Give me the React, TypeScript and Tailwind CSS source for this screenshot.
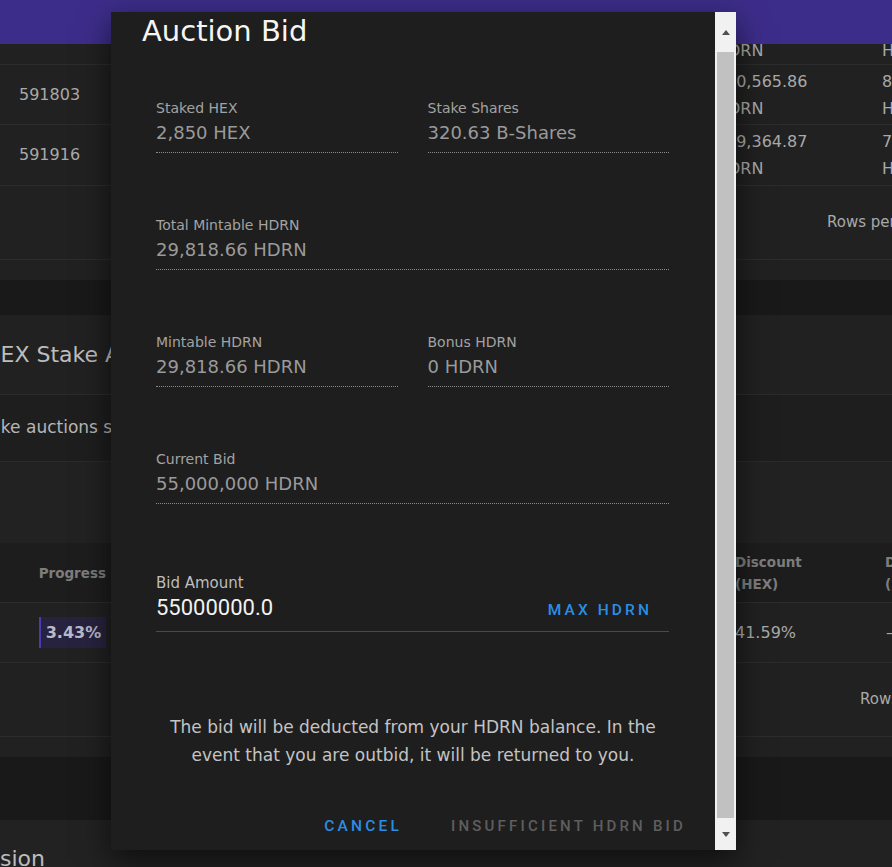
const Field = ({ label, value }: { label: string; value: string }) => {
	return (
		<div className="border-b border-dotted border-[#8c8c8c] pb-[6px]">
			<p className="text-[14px] leading-[20px] text-[#a3a3a3]">{label}</p>
			<p className="mt-[2px] text-[18px] leading-[26px] text-[#9a9a9a]">{value}</p>
		</div>
	);
};

const AuctionBidModal = () => {
	return (
		<div className="absolute left-[111px] top-[12px] flex h-[838px] w-[625px] bg-[#1e1e1e] shadow-[0_10px_30px_rgba(0,0,0,0.6)]">
			<div className="flex w-[604px] flex-col">
				{/* Title */}
				<h2 className="mt-[1px] pl-[31px] text-[29px] leading-[36px] text-[#f5f5f5]">Auction Bid</h2>

				{/* Stake info */}
				<div className="mt-[49px] flex flex-col gap-[62px] pl-[45px] pr-[46px]">
					<div className="grid grid-cols-2 gap-[30px]">
						<Field label="Staked HEX" value="2,850 HEX" />
						<Field label="Stake Shares" value="320.63 B-Shares" />
					</div>
					<Field label="Total Mintable HDRN" value="29,818.66 HDRN" />
					<div className="grid grid-cols-2 gap-[30px]">
						<Field label="Mintable HDRN" value="29,818.66 HDRN" />
						<Field label="Bonus HDRN" value="0 HDRN" />
					</div>
					<Field label="Current Bid" value="55,000,000 HDRN" />
				</div>

				{/* Bid input */}
				<div className="ml-[45px] mr-[46px] mt-[69px] border-b border-[#4a4a4a] pb-[9px]">
					<p className="text-[15px] leading-[20px] text-[#bdbdbd]">Bid Amount</p>
					<div className="flex items-center justify-between">
						<span className="font-['Roboto',sans-serif] text-[22px] leading-[28px] text-[#f2f2f2]">
							55000000.0
						</span>
						<button className="mr-[17px] mt-[6px] font-['Roboto',sans-serif] text-[15.5px] font-medium tracking-[0.2em] text-[#2a8de6]">
							MAX HDRN
						</button>
					</div>
				</div>

				{/* Note */}
				<p className="mx-auto mt-[81px] w-[520px] text-center text-[17px] leading-[28px] text-[#c4c4c4]">
					The bid will be deducted from your HDRN balance. In the event that you are outbid, it will be
					returned to you.
				</p>

				{/* Actions */}
				<div className="mt-[45px] flex items-center justify-end gap-[49px] pr-[29px] font-['Roboto',sans-serif] font-medium leading-[24px] tracking-[0.2em]">
					<button className="text-[15.5px] text-[#2a8de6]">CANCEL</button>
					<button className="text-[15px] text-[#5e5e5e]">INSUFFICIENT HDRN BID</button>
				</div>
			</div>

			{/* Scrollbar */}
			<div className="flex w-[21px] flex-col items-center bg-[#f1f1f1]">
				<div className="flex h-[40px] items-center justify-center">
					<div className="h-0 w-0 border-x-[4px] border-b-[5px] border-x-transparent border-b-[#505050]" />
				</div>
				<div className="h-[766px] w-[17px] bg-[#c1c1c1]" />
				<div className="flex flex-1 items-center justify-center">
					<div className="h-0 w-0 border-x-[4px] border-t-[5px] border-x-transparent border-t-[#505050]" />
				</div>
			</div>
		</div>
	);
};

const App = () => {
	return (
		<div className="relative h-[867px] w-[892px] overflow-hidden bg-[#191919] font-['DejaVu_Sans',sans-serif] text-[16px] text-[#a9a9a9]">
			{/* Header */}
			<div className="h-[44px] bg-[#3d2d8a]" />

			{/* Stakes table */}
			<div className="bg-[#212121]">
				<div className="flex h-[21px] overflow-hidden border-b border-[#2c2c2c]">
					<div className="w-[716px] shrink-0" />
					<p className="-mt-[7px] w-[166px] shrink-0 leading-[27px]">HDRN</p>
					<p className="-mt-[7px] leading-[27px]">HEX</p>
				</div>
				<div className="flex h-[60px] items-center border-b border-[#2c2c2c]">
					<p className="w-[726px] shrink-0 pl-[19px]">591803</p>
					<div className="w-[156px] shrink-0 leading-[27px]">
						<p>30,565.86</p>
						<p className="-ml-[10px]">HDRN</p>
					</div>
					<div className="leading-[27px]">
						<p>8</p>
						<p>HEX</p>
					</div>
				</div>
				<div className="flex h-[61px] items-center border-b border-[#2c2c2c]">
					<p className="w-[726px] shrink-0 pl-[19px]">591916</p>
					<div className="w-[156px] shrink-0 leading-[27px]">
						<p>29,364.87</p>
						<p className="-ml-[10px]">HDRN</p>
					</div>
					<div className="leading-[27px]">
						<p>7</p>
						<p>HEX</p>
					</div>
				</div>
				<div className="flex h-[74px] items-center justify-end border-b border-[#2c2c2c]">
					<p className="w-[65px] whitespace-nowrap text-[15px]">Rows per page</p>
				</div>
				<div className="h-[20px]" />
			</div>

			<div className="h-[35px]" />

			{/* Auctions card */}
			<div className="bg-[#212121]">
				<div className="flex h-[80px] items-center overflow-hidden border-b border-[#2c2c2c]">
					<p className="-ml-[16px] whitespace-nowrap text-[22px] text-[#bdbdbd]">HEX Stake Auctions</p>
				</div>
				<div className="flex h-[67px] items-center overflow-hidden border-b border-[#2a2a2a] bg-[#1e1e1e]">
					<p className="-ml-[27px] whitespace-nowrap text-[17px] text-[#b6b6b6]">Stake auctions show</p>
				</div>
				<div className="h-[81px] bg-[#222222]" />
				<div className="flex h-[60px] items-center border-b border-[#2c2c2c] bg-[#1d1d1d] text-[13.5px] font-bold leading-[22px] text-[#7d7d7d]">
					<div className="flex w-[111px] shrink-0 justify-end pr-[5px]">
						<p>Progress</p>
					</div>
					<div className="w-[624px] shrink-0" />
					<div className="w-[150px] shrink-0">
						<p>Discount</p>
						<p>(HEX)</p>
					</div>
					<div>
						<p>D</p>
						<p>(</p>
					</div>
				</div>
				<div className="flex h-[60px] items-center border-b border-[#2c2c2c]">
					<div className="flex w-[111px] shrink-0 justify-end pr-[5px]">
						<div className="flex h-[31px] w-[67px] items-center justify-center border-l-2 border-[#4a3bb0] bg-[#27233f] font-bold text-[#b9b9c9]">
							3.43%
						</div>
					</div>
					<div className="w-[624px] shrink-0" />
					<p className="w-[151px] shrink-0">41.59%</p>
					<p>–</p>
				</div>
				<div className="flex h-[74px] items-center justify-end border-b border-[#2c2c2c]">
					<p className="w-[32px] whitespace-nowrap text-[15px]">Rows per page</p>
				</div>
				<div className="h-[20px]" />
			</div>

			<div className="h-[63px]" />

			{/* Next card */}
			<div className="h-[60px] bg-[#222222] pt-[25px]">
				<p className="text-[22px] leading-[28px] text-[#bdbdbd]">sion</p>
			</div>

			<AuctionBidModal />
		</div>
	);
};

export default App;
